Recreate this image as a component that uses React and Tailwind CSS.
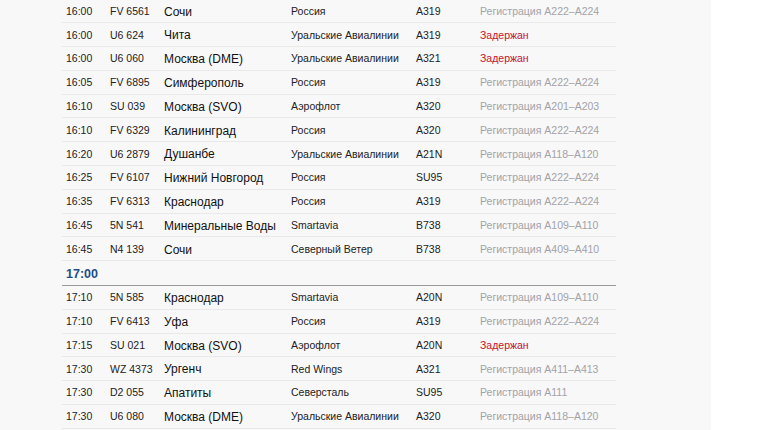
import React from 'react';

const first = [
  ['16:00', 'FV 6561', 'Сочи', 'Россия', 'A319', 'Регистрация A222–A224'],
  ['16:00', 'U6 624', 'Чита', 'Уральские Авиалинии', 'A319', 'Задержан'],
  ['16:00', 'U6 060', 'Москва (DME)', 'Уральские Авиалинии', 'A321', 'Задержан'],
  ['16:05', 'FV 6895', 'Симферополь', 'Россия', 'A319', 'Регистрация A222–A224'],
  ['16:10', 'SU 039', 'Москва (SVO)', 'Аэрофлот', 'A320', 'Регистрация A201–A203'],
  ['16:10', 'FV 6329', 'Калининград', 'Россия', 'A320', 'Регистрация A222–A224'],
  ['16:20', 'U6 2879', 'Душанбе', 'Уральские Авиалинии', 'A21N', 'Регистрация A118–A120'],
  ['16:25', 'FV 6107', 'Нижний Новгород', 'Россия', 'SU95', 'Регистрация A222–A224'],
  ['16:35', 'FV 6313', 'Краснодар', 'Россия', 'A319', 'Регистрация A222–A224'],
  ['16:45', '5N 541', 'Минеральные Воды', 'Smartavia', 'B738', 'Регистрация A109–A110'],
  ['16:45', 'N4 139', 'Сочи', 'Северный Ветер', 'B738', 'Регистрация A409–A410'],
];

const second = [
  ['17:10', '5N 585', 'Краснодар', 'Smartavia', 'A20N', 'Регистрация A109–A110'],
  ['17:10', 'FV 6413', 'Уфа', 'Россия', 'A319', 'Регистрация A222–A224'],
  ['17:15', 'SU 021', 'Москва (SVO)', 'Аэрофлот', 'A20N', 'Задержан'],
  ['17:30', 'WZ 4373', 'Ургенч', 'Red Wings', 'A321', 'Регистрация A411–A413'],
  ['17:30', 'D2 055', 'Апатиты', 'Северсталь', 'SU95', 'Регистрация A111'],
  ['17:30', 'U6 080', 'Москва (DME)', 'Уральские Авиалинии', 'A320', 'Регистрация A118–A120'],
];

function Row({ r }) {
  const delayed = r[5] === 'Задержан';
  return (
    <div className="flex items-center h-[23.8px] pt-[1.5px] border-b border-[#e9e9ea] text-[10.5px] text-[#222]">
      <span className="w-[48px] pl-[4px] shrink-0">{r[0]}</span>
      <span className="w-[54px] shrink-0">{r[1]}</span>
      <span className="w-[127px] shrink-0 text-[12px] text-[#111]">{r[2]}</span>
      <span className="w-[125px] shrink-0">{r[3]}</span>
      <span className="w-[64px] shrink-0">{r[4]}</span>
      <span className={delayed ? 'text-[#c4122f]' : 'text-[#a3a3a6]'}>{r[5]}</span>
    </div>
  );
}

export default function App() {
  return (
    <div className="w-[770px] h-[430px] overflow-hidden bg-white flex" style={{ fontFamily: '"Liberation Sans", Arial, sans-serif' }}>
      <div className="w-[711px] h-full bg-[#f8f8f9] pl-[62px]">
        <div className="w-[554px] -mt-[0.5px]">
          {first.map((r, i) => <Row key={i} r={r} />)}
          <div className="h-[24.7px] flex items-center pt-[2px] pl-[4px] border-b border-[#9a9a9c] text-[12.5px] font-bold text-[#1d4e89]">
            17:00
          </div>
          {second.map((r, i) => <Row key={i} r={r} />)}
        </div>
      </div>
      <div className="flex-1 bg-white" />
    </div>
  );
}
